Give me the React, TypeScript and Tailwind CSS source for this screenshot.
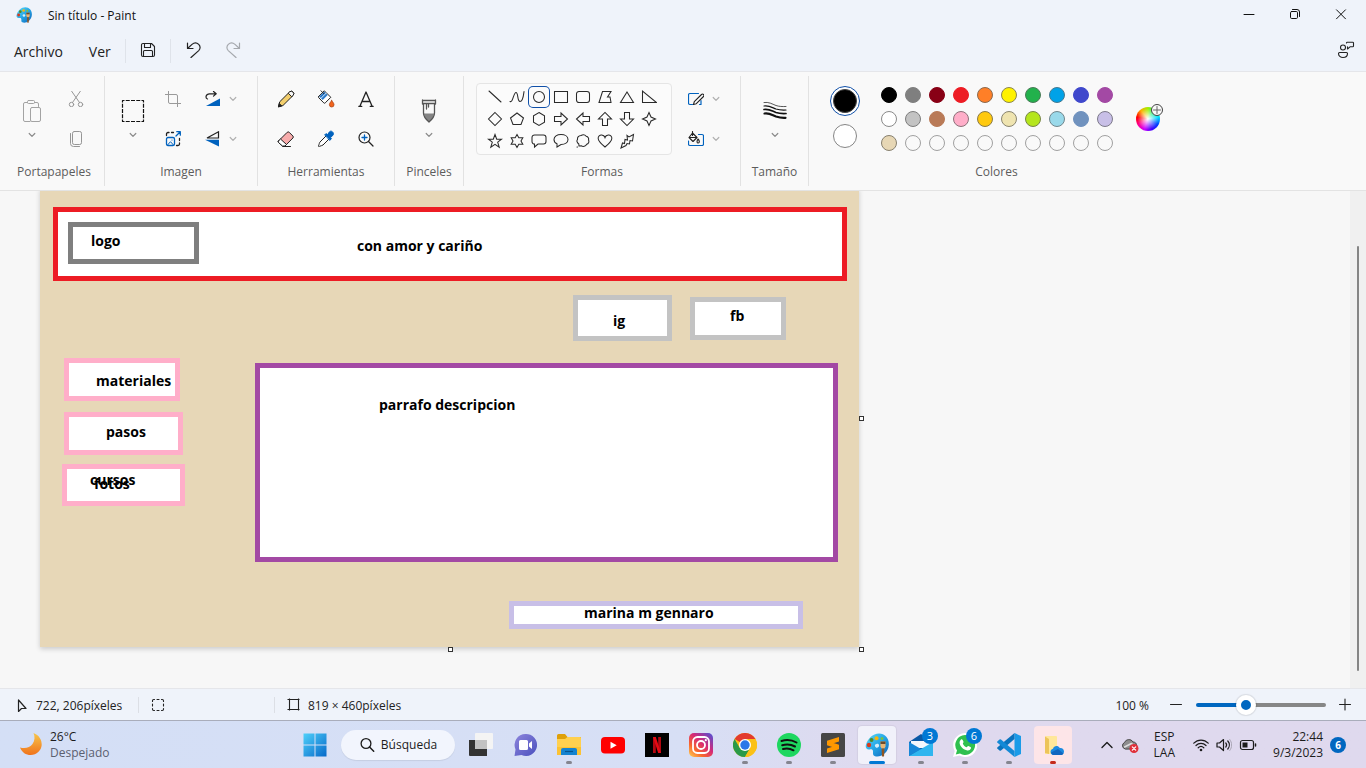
import React from 'react';
import type { ReactNode } from 'react';

type IconProps = { size?: number; box?: number; className?: string; children: ReactNode };

function Icon({ size = 16, box, className = '', children }: IconProps) {
  const b = box ?? size;
  return (
    <svg
      width={size}
      height={size}
      viewBox={`0 0 ${b} ${b}`}
      fill="none"
      stroke="currentColor"
      strokeLinecap="round"
      strokeLinejoin="round"
      className={`shrink-0 ${className}`}
      aria-hidden="true"
    >
      {children}
    </svg>
  );
}

function Chevron({ className = 'text-[#8a8a8a]' }: { className?: string }) {
  return (
    <Icon size={8} className={className}>
      <path d="M1.2 2.5 4 5.3l2.8-2.8" strokeWidth="1.2" />
    </Icon>
  );
}

function PaletteIcon({ size }: { size: number }) {
  return (
    <svg width={size} height={size} viewBox="0 0 24 24" aria-hidden="true">
      <defs>
        <linearGradient id={`pal${size}`} x1="0" y1="0" x2="1" y2="1">
          <stop offset="0" stopColor="#5fdcf8" />
          <stop offset="0.5" stopColor="#25a6e6" />
          <stop offset="1" stopColor="#0f62b8" />
        </linearGradient>
      </defs>
      <path
        d="M14 .5C7.500.5 3 5.500 1 11.500c-1 3 .5 5.500 3.500 5 2-.4 3.400 0 3.500 1.900.1 2-.5 3.600 1.500 4.600 5 2 13.500-2 14.300-11C24.300 5.500 20 .5 14 .5Z"
        fill={`url(#pal${size})`}
      />
      <path d="M11.500 11c2-.8 3.500 1.500 2 3s-3 .5-3.500-.8.300-1.800 1.500-2.200Z" fill="#e8f6fd" opacity="0.9" />
      <circle cx="11.500" cy="5.200" r="2" fill="#f8b50a" />
      <circle cx="6.500" cy="7" r="2" fill="#4e8a2c" />
      <circle cx="4" cy="12" r="2.200" fill="#d83b1e" />
      <circle cx="17" cy="5.500" r="1.500" fill="#7bc142" />
      <path d="M15.500 8.500h5v5l-1 2h-3l-1-2Z" fill="#e9b574" />
      <path d="M15.500 8.500h5v2.500h-5Z" fill="#6d4a2a" />
      <path d="M16.600 15.500h2.800l-.3 7.200c0 1.200-2.200 1.200-2.200 0Z" fill="#8f5522" />
    </svg>
  );
}

/* ---------- Title and menu bars ---------- */

function TitleBar() {
  return (
    <header className="flex h-[30px] items-center bg-[#eff3fa] pr-0.5 pl-4">
      <PaletteIcon size={16} />
      <h1 className="ml-4 flex-1 pt-0.5 text-xs text-[#111]">Sin título - Paint</h1>
      <button type="button" aria-label="Minimizar" className="grid h-[30px] w-[46px] place-items-center text-[#111]">
        <Icon size={12}>
          <path d="M1 5.500h10" />
        </Icon>
      </button>
      <button type="button" aria-label="Restaurar" className="grid h-[30px] w-[46px] place-items-center text-[#111]">
        <Icon size={12}>
          <rect x="1.500" y="2.500" width="7" height="7" rx="1.200" />
          <path d="M3.500.5h4.500a2.500 2.500 0 0 1 2.500 2.500v4.500" />
        </Icon>
      </button>
      <button type="button" aria-label="Cerrar" className="grid h-[30px] w-[46px] place-items-center text-[#111]">
        <Icon size={12}>
          <path d="m1.500.8 9 9m0-9-9 9" />
        </Icon>
      </button>
    </header>
  );
}

function MenuBar() {
  return (
    <nav className="flex h-[42px] items-center border-b border-[#e5e6ea] bg-[#eff3fa] px-3 pr-[11px] text-[#222]">
      <button type="button" className="px-0.5 pt-0.5 text-sm">Archivo</button>
      <button type="button" className="ml-[22px] px-0.5 pt-0.5 text-sm">Ver</button>
      <span className="ml-3 h-6 w-px bg-[#dfe3ea]" />
      <button type="button" aria-label="Guardar" className="ml-[14px] pb-0.5">
        <Icon>
          <path d="M1.500 3a1.500 1.500 0 0 1 1.500-1.500h8.500l3 3V13a1.500 1.500 0 0 1-1.500 1.500H3A1.500 1.500 0 0 1 1.500 13ZM4.500 1.500v4h6v-4M3.500 14.500V9.500a1 1 0 0 1 1-1h7a1 1 0 0 1 1 1v5" strokeWidth="1.100" />
        </Icon>
      </button>
      <span className="ml-[14px] h-6 w-px bg-[#dfe3ea]" />
      <button type="button" aria-label="Deshacer" className="ml-[15px] pb-0.5">
        <Icon>
          <path d="M1.500 1v5.500H7M1.800 6.200 6 2.400c2.200-2 5-1.700 6.700 0s2 4.300 0 6.200L5 15.500" strokeWidth="1.200" />
        </Icon>
      </button>
      <button type="button" aria-label="Rehacer" className="ml-[23px] pb-0.5 text-[#a5a8ad]">
        <Icon>
          <path d="M14.500 1v5.500H9M14.200 6.200 10 2.400C7.800.4 5 .7 3.300 2.400s-2 4.300 0 6.200L11 15.500" strokeWidth="1.200" />
        </Icon>
      </button>
      <button type="button" aria-label="Comentarios" className="ml-auto pb-0.5">
        <Icon size={18}>
          <circle cx="6" cy="6.500" r="2.500" strokeWidth="1.100" />
          <path d="M2.500 11.500h7a1 1 0 0 1 1 1c0 2.500-2 4-4.500 4s-4.500-1.500-4.500-4a1 1 0 0 1 1-1ZM9.500 2a.8.8 0 0 1 .8-.8h5.400a.8.8 0 0 1 .8.8v3a.8.8 0 0 1-.8.8H13L10.500 8V5.800" strokeWidth="1.100" />
        </Icon>
      </button>
    </nav>
  );
}

/* ---------- Ribbon ---------- */

function Group({ label, className = 'px-2', last = false, children }: { label: string; className?: string; last?: boolean; children: ReactNode }) {
  return (
    <section className={`my-1 flex flex-col pt-[3px] ${last ? '' : 'border-r border-[#e2e2e2]'} ${className}`}>
      <div className="flex h-20 items-center">{children}</div>
      <h2 className="mt-[5px] text-center text-xs leading-4 text-[#5c5c5c]">{label}</h2>
    </section>
  );
}

function BigTool({ label, className = 'w-10', children }: { label: string; className?: string; children: ReactNode }) {
  return (
    <button type="button" aria-label={label} className={`flex h-20 flex-col items-center justify-center gap-2 ${className}`}>
      {children}
      <Chevron />
    </button>
  );
}

function Tool({ label, className = 'text-[#222]', children }: { label: string; className?: string; children: ReactNode }) {
  return (
    <button type="button" aria-label={label} className={`grid size-10 place-items-center ${className}`}>
      {children}
    </button>
  );
}

function MenuTool({ label, children }: { label: string; children: ReactNode }) {
  return (
    <button type="button" aria-label={label} className="flex h-10 w-14 items-center justify-center gap-2 text-[#222]">
      {children}
      <Chevron className="text-[#b0b0b0]" />
    </button>
  );
}

const shapes: { name: string; d: string }[] = [
  { name: 'Línea', d: 'M2 2 14 13' },
  { name: 'Curva', d: 'M1 12.500c3 1.500 3.500-9 6-9s1 9 4 9 3.500-6 4-10' },
  { name: 'Óvalo', d: 'M8 2.500a5.500 5.500 0 1 0 0 11 5.500 5.500 0 1 0 0-11Z' },
  { name: 'Rectángulo', d: 'M1.500 2.500h13v11h-13Z' },
  { name: 'Rectángulo redondeado', d: 'M4 2.500h8a2.500 2.500 0 0 1 2.500 2.500v6a2.500 2.500 0 0 1-2.500 2.500H4A2.500 2.500 0 0 1 1.500 11V5A2.500 2.500 0 0 1 4 2.500Z' },
  { name: 'Polígono', d: 'M5.500 2.500h8.500l-3.500 5.500h2.500l1 5.500H2Z' },
  { name: 'Triángulo', d: 'M8 3 14.500 13.500h-13Z' },
  { name: 'Triángulo rectángulo', d: 'M1.500 2v11.500h14Z' },
  { name: 'Rombo', d: 'M8 1.500 14.500 8 8 14.500 1.500 8Z' },
  { name: 'Pentágono', d: 'M8 2 14.500 7l-2.500 6.500H4L1.500 7Z' },
  { name: 'Hexágono', d: 'M8 1.500 13.500 4.700v6.600L8 14.500l-5.500-3.200V4.700Z' },
  { name: 'Flecha derecha', d: 'M1.500 5.500H8v-3.500L14.500 8 8 14v-3.500H1.500Z' },
  { name: 'Flecha izquierda', d: 'M14.500 5.500H8v-3.500L1.500 8 8 14v-3.500h6.500Z' },
  { name: 'Flecha arriba', d: 'M5.500 14.500V8H1.500L8 1.500 14.500 8h-4v6.500Z' },
  { name: 'Flecha abajo', d: 'M5.500 1.500V8H1.500L8 14.500 14.500 8h-4V1.500Z' },
  { name: 'Estrella de cuatro puntas', d: 'm8 1.500 2 4.500 4.500 2-4.500 2-2 4.500L6 10 1.500 8 6 6Z' },
  { name: 'Estrella de cinco puntas', d: 'm8 1.500 1.700 4.700h4.800l-3.800 3 1.500 5L8 11.300l-4.200 2.900 1.500-5-3.800-3h4.800Z' },
  { name: 'Estrella de seis puntas', d: 'm8 1.500 1.800 3.300h4L12 8l1.800 3.200h-4L8 14.500l-1.800-3.300h-4L4 8 2.200 4.800h4Z' },
  { name: 'Llamada rectangular', d: 'M3.500 2h9A2.500 2.500 0 0 1 15 4.500v4a2.500 2.500 0 0 1-2.500 2.500H7l-3.500 3V11A2.500 2.500 0 0 1 1 8.500v-4A2.500 2.500 0 0 1 3.500 2Z' },
  { name: 'Llamada ovalada', d: 'M8 1.500c4 0 7 2 7 5s-3 5-7 5L4 14v-3.200C2 10 1 8.400 1 6.500c0-3 3-5 7-5Z' },
  { name: 'Llamada de nube', d: 'M6 2.500c2-1.200 4-.8 5.200.8 2 .4 2.800 2 2.300 3.700 1 2-.2 3.800-1.800 4.200-1.200 2.300-3.700 2.800-5.500 1.600L4 13l-.2-2C1.800 9.500 1.500 7.700 2.500 6.500 2.300 4.300 4 2.700 6 2.500ZM2 14h.5' },
  { name: 'Corazón', d: 'M8 14C5.500 12 1.500 8.500 1.200 5.800.8 3.200 3 1.800 4.700 2 6.500 2.200 7.500 3 8 4.500c.5-1.500 1.500-2.300 3.300-2.500 1.700-.2 3.900 1.200 3.500 3.800C14.500 8.500 10.500 12 8 14Z' },
  { name: 'Relámpago', d: 'm8 2.500 2 1.500L14.500 1.500 13.500 8l-2.500-.5-.5 3.500-2.500-.5-1 2L2 15l1.500-5 2 .5L6 6.500l2.500.5Z' },
];

function ShapeGallery() {
  return (
    <div className="ml-1 grid h-[72px] w-[196px] grid-cols-[repeat(8,22px)] grid-rows-[repeat(3,22px)] rounded border border-[#e5e5e5] bg-[#fbfbfb] px-[7px] py-0.5">
      {shapes.map((s) => (
        <button
          key={s.name}
          type="button"
          aria-label={s.name}
          className={`grid place-items-center text-[#2a2a2a] ${s.name === 'Óvalo' ? 'm-px rounded ring-1 ring-[#0f4fa8]' : ''}`}
        >
          <Icon>
            <path d={s.d} strokeWidth="1.050" strokeLinejoin="miter" />
          </Icon>
        </button>
      ))}
    </div>
  );
}

const swatches: { name: string; className: string }[] = [
  { name: 'Negro', className: 'bg-black border-black' },
  { name: 'Gris 50 %', className: 'bg-[#7f7f7f] border-[#7f7f7f]' },
  { name: 'Rojo oscuro', className: 'bg-[#880015] border-[#880015]' },
  { name: 'Rojo', className: 'bg-[#ed1c24] border-[#ed1c24]' },
  { name: 'Naranja', className: 'bg-[#ff7f27] border-[#8a6a50]' },
  { name: 'Amarillo', className: 'bg-[#fff200] border-[#8a8550]' },
  { name: 'Verde', className: 'bg-[#22b14c] border-[#4b7a58]' },
  { name: 'Turquesa', className: 'bg-[#00a2e8] border-[#467a90]' },
  { name: 'Índigo', className: 'bg-[#3f48cc] border-[#3f48cc]' },
  { name: 'Púrpura', className: 'bg-[#a349a4] border-[#a349a4]' },
  { name: 'Blanco', className: 'bg-white border-[#8a8a8a]' },
  { name: 'Gris 25 %', className: 'bg-[#c3c3c3] border-[#7d7d7d]' },
  { name: 'Marrón', className: 'bg-[#b97a57] border-[#b97a57]' },
  { name: 'Rosa', className: 'bg-[#ffaec9] border-[#8c7179]' },
  { name: 'Oro', className: 'bg-[#ffc90e] border-[#8a7a48]' },
  { name: 'Amarillo claro', className: 'bg-[#efe4b0] border-[#8a8570]' },
  { name: 'Lima', className: 'bg-[#b5e61d] border-[#788548]' },
  { name: 'Turquesa claro', className: 'bg-[#99d9ea] border-[#71868c]' },
  { name: 'Gris azulado', className: 'bg-[#7092be] border-[#7092be]' },
  { name: 'Lavanda', className: 'bg-[#c8bfe7] border-[#7d7a8a]' },
  { name: 'Arena', className: 'bg-[#e7d7b5] border-[#87806f]' },
];

const emptySlots = [1, 2, 3, 4, 5, 6, 7, 8, 9];

function Ribbon() {
  return (
    <div className="flex h-[119px] border-b border-[#e3e3e3] bg-[#f9f9f9]">
      <Group label="Portapapeles" className="pr-2 pl-3">
        <BigTool label="Pegar">
          <Icon size={24} className="text-[#a3a3a3]">
            <path d="M7.500 3.500H5A1.500 1.500 0 0 0 3.500 5v16A1.500 1.500 0 0 0 5 22.500h5M14.500 3.500H17A1.500 1.500 0 0 1 18.500 5v2.500M8.500 1.500h5a1 1 0 0 1 1 1v1a1 1 0 0 1-1 1h-5a1 1 0 0 1-1-1v-1a1 1 0 0 1 1-1Z" />
            <rect x="10.500" y="8.500" width="10" height="14" rx="1.500" />
          </Icon>
        </BigTool>
        <div className="ml-1">
          <Tool label="Cortar" className="text-[#969696]">
            <Icon>
              <circle cx="3.500" cy="13.500" r="2.200" />
              <circle cx="12.500" cy="13.500" r="2.200" />
              <path d="M3.500 0 11.500 11.500M12.500 0 4.500 11.500" />
            </Icon>
          </Tool>
          <Tool label="Copiar" className="text-[#969696]">
            <Icon>
              <rect x="4.500" y=".5" width="9" height="13" rx="1.800" />
              <path d="M2.500 2.500v10a3 3 0 0 0 3 3h6" />
            </Icon>
          </Tool>
        </div>
      </Group>

      <Group label="Imagen">
        <BigTool label="Seleccionar">
          <Icon size={24} className="text-[#111]">
            <rect x="1.500" y="1.500" width="21" height="21" strokeDasharray="4 1.250" strokeDashoffset="2" strokeLinecap="butt" strokeWidth="1.200" />
          </Icon>
        </BigTool>
        <div>
          <Tool label="Recortar" className="text-[#9a9a9a]">
            <Icon>
              <path d="M3.500 0v11a1.500 1.500 0 0 0 1.500 1.500h11M0 3.500h11A1.500 1.500 0 0 1 12.500 5v11" />
            </Icon>
          </Tool>
          <Tool label="Cambiar tamaño">
            <Icon>
              <path d="M1.500 4.500V3A1.500 1.500 0 0 1 3 1.500h1M6.500 1.500h2M14.500 7.500v2M14.500 12v1a1.500 1.500 0 0 1-1.500 1.500h-1.500" strokeWidth="1.300" />
              <path d="M11 5 15 1M11.800.7h3.500v3.500" stroke="#0062be" strokeWidth="1.300" />
              <rect x="1.500" y="6.500" width="8" height="8" rx="1.500" stroke="#0062be" strokeWidth="1.300" />
              <path d="m2.500 14 3-3.300 3 3.300" stroke="#0062be" />
              <circle cx="7" cy="9" r=".6" fill="#0062be" stroke="none" />
            </Icon>
          </Tool>
        </div>
        <div>
          <MenuTool label="Girar">
            <Icon>
              <path d="M15 7.500V15H1Z" fill="#0062be" stroke="none" />
              <path d="M2.500 8C0 7 .8 2.800 4.500 2.800H11M8.500.5l2.700 2.300-2.700 2.300" strokeWidth="1.200" />
            </Icon>
          </MenuTool>
          <MenuTool label="Voltear">
            <Icon>
              <path d="M13.500.8v6.200H2Z" strokeWidth="1.200" strokeLinejoin="miter" />
              <path d="M14 8.800V15.500L0 8.800Z" fill="#0062be" stroke="none" />
            </Icon>
          </MenuTool>
        </div>
      </Group>

      <Group label="Herramientas">
        <div className="grid grid-cols-[40px_40px_40px]">
          <Tool label="Lápiz">
            <Icon size={18}>
              <path d="m1.500 16.500 1.200-4.700L12.500 2a2.400 2.400 0 0 1 3.500 3.500L6.200 15.300Z" fill="#f3cf6d" />
              <path d="m11.500 3 1-1A2.400 2.400 0 0 1 16 5.500l-1 1Z" fill="#f8f8f8" />
              <path d="m1.500 16.500.8-3 2.200 2.200Z" fill="#222" />
            </Icon>
          </Tool>
          <Tool label="Relleno">
            <Icon size={18}>
              <path d="M1.800 6.300 7.300.8l6.500 6.500-5.600 5.600a1 1 0 0 1-1.400 0L1.800 7.800a1 1 0 0 1 0-1.500Z" fill="#fff" />
              <path d="M2.300 6.500 7.300 1.500l3.400 3.400-5 5Z" fill="#2b79c8" stroke="none" />
              <path d="m4.300 8 5-5" stroke="#d7ebff" />
              <path d="M4 .8 7 3.800" />
              <path d="M14.700 10.500c1.300 1.800 2.300 3 2.300 4.200a2.300 2.300 0 0 1-4.600 0c0-1.200 1-2.400 2.300-4.200Z" fill="#f2641d" stroke="#a23a0a" strokeWidth=".7" />
            </Icon>
          </Tool>
          <Tool label="Texto">
            <Icon>
              <path d="m2 15 6-14 6 14M4 10.500h8M.8 15.300h3M12.200 15.300h3" strokeWidth="1.300" />
            </Icon>
          </Tool>
          <Tool label="Borrador">
            <Icon size={18}>
              <path d="m1.500 11 8.700-8.700a1.500 1.500 0 0 1 2 0l3.700 3.700a1.500 1.500 0 0 1 0 2L8 16H5.500l-4-3.500a1 1 0 0 1 0-1.500Z" fill="#f8acac" />
              <path d="m1.500 11 2-2 6 5.500L8 16H5.500l-4-3.500a1 1 0 0 1 0-1.500Z" fill="#fff" />
              <path d="M6 16.500h7.500" />
            </Icon>
          </Tool>
          <Tool label="Selector de color">
            <Icon size={18}>
              <path d="m9 6-6 6c-.8.800-.5 2-1.500 3.500-.5.800.200 1.300 1 .8 1.500-.8 2.700-.5 3.500-1.300l6-6" fill="#fff" />
              <path d="m8 4.500 1.500-.8 1.300.9 1.500-2.600c1.600-2.300 5.400.5 3.700 3.300L13.500 7.200l.9 1.500-1.400 1.500Z" fill="#0062be" stroke="#0062be" />
            </Icon>
          </Tool>
          <Tool label="Lupa">
            <Icon>
              <circle cx="6.500" cy="6.500" r="5.500" strokeWidth="1.200" />
              <path d="m10.500 10.500 4.500 4.500" strokeWidth="1.200" />
              <path d="M4 6.500h5M6.500 4v5" stroke="#0062be" strokeWidth="1.300" />
            </Icon>
          </Tool>
        </div>
      </Group>

      <Group label="Pinceles">
        <BigTool label="Pinceles" className="w-[52px]">
          <Icon size={24} className="text-[#555]">
            <path d="M7 14.500h10c0 2.700-1.800 5.500-5 8.500-3.200-3-5-5.800-5-8.500Z" fill="#858585" stroke="none" />
            <path d="M5.500 1v4M18.500 1v4M5.500 1.500h13M5.500 4.500h13M6.500 5v9c0 3.500 2.500 6.500 5.500 9 3-2.500 5.500-5.500 5.500-9V5M9.500 5v5M11.500 5v3" strokeWidth="1.300" />
          </Icon>
        </BigTool>
      </Group>

      <Group label="Formas">
        <ShapeGallery />
        <div className="ml-1">
          <MenuTool label="Contorno de forma">
            <Icon>
              <path d="M10.500 2.500H2A1.500 1.500 0 0 0 .5 4v8A1.500 1.500 0 0 0 2 13.500h2.500M11.500 13.500H13V9.500" stroke="#0062be" strokeWidth="1.200" />
              <path d="m5.500 13.500.8-2.800 7.200-7.200a1.400 1.400 0 0 1 2 2l-7.200 7.200Z" fill="#fff" strokeWidth="1.100" />
            </Icon>
          </MenuTool>
          <MenuTool label="Relleno de forma">
            <Icon>
              <path d="M.5 10v3A1.500 1.500 0 0 0 2 14.500h12a1.500 1.500 0 0 0 1.500-1.500V5A1.500 1.500 0 0 0 14 3.500h-3.500" stroke="#0062be" strokeWidth="1.200" />
              <path d="m4.500 2 4.500 4.500-4 4-4-4Zm0-1.500v4M1 6.500h8M10 8c2 2 1.500 4 .2 4S8.500 10.500 10 8Z" strokeWidth="1.100" />
            </Icon>
          </MenuTool>
        </div>
      </Group>

      <Group label="Tamaño">
        <BigTool label="Tamaño" className="w-[51px]">
          <Icon size={24} className="text-[#111]">
            <path d="M1 3.500c5-.8 8 1.500 12 3 3 1 6 1.200 10 1" strokeWidth=".7" />
            <path d="M1 7c5-.8 8 1.500 12 3 3 1 6 1.200 10 1" strokeWidth="1.200" />
            <path d="M1 10.500c5-.8 8 1.500 12 3 3 1 6 1.200 10 1" strokeWidth="1.700" />
            <path d="M1.500 14.500c5-.8 7.500 1.500 11.500 3 3 1 6 1.500 9.500 1.300" strokeWidth="2.200" />
          </Icon>
        </BigTool>
      </Group>

      <Group label="Colores" className="pr-2 pl-4" last>
        <div className="flex h-[72px] w-10 flex-col items-center justify-center gap-2 pb-[5px]">
          <button type="button" aria-label="Color 1" className="grid size-[30px] place-items-center rounded-full border border-[#0f4fa8] bg-white">
            <span className="size-6 rounded-full border border-[#444] bg-black" />
          </button>
          <button type="button" aria-label="Color 2" className="size-6 rounded-full border border-[#858585] bg-white" />
        </div>
        <div className="ml-3 grid grid-cols-[repeat(10,24px)] grid-rows-[repeat(3,24px)] place-items-center">
          {swatches.map((s) => (
            <button key={s.name} type="button" aria-label={s.name} className={`size-4 rounded-full border ${s.className}`} />
          ))}
          {emptySlots.map((n) => (
            <button key={n} type="button" aria-label={`Color personalizado ${n}`} className="size-4 rounded-full border border-[#a0a0a0]" />
          ))}
        </div>
        <button type="button" aria-label="Editar colores" className="relative ml-[11px] grid size-10 place-items-center">
          <span className="size-6 rounded-full bg-[radial-gradient(circle,#ffffff_0%,#ffffff00_62%),conic-gradient(from_0deg,#a0f000,#00f080,#00e0ff,#0040ff,#4000ff,#d000ff,#ff0090,#ff0000,#ffb000,#a0f000)]" />
          <span className="absolute top-[5px] right-[5px] grid size-3 place-items-center rounded-full border border-[#444] bg-[#f9f9f9] text-[#666]">
            <Icon size={8}>
              <path d="M4 .5v7M.5 4h7" />
            </Icon>
          </span>
        </button>
      </Group>
    </div>
  );
}

/* ---------- Drawing ---------- */

const labelText = "absolute font-['Open_Sans','Noto_Sans',sans-serif] text-sm leading-5 font-bold whitespace-nowrap text-black";

function Drawing() {
  return (
    <div className="absolute -top-[3px] left-10 h-[459px] w-[819px] bg-[#e7d7b7] shadow-[0_2px_5px_#0000002e]">
      <div className="absolute top-[19px] left-[13px] h-[74px] w-[794px] border-5 border-[#ed1c24] bg-white" />
      <div className="absolute top-[34px] left-7 h-[42px] w-[131px] border-5 border-[#7f7f7f] bg-white" />
      <p className={`${labelText} top-[43px] left-[51px]`}>logo</p>
      <p className={`${labelText} top-[48px] left-[317px]`}>con amor y cariño</p>

      <div className="absolute top-[107px] left-[533px] h-[46px] w-[99px] border-5 border-[#c3c3c3] bg-white" />
      <p className={`${labelText} top-[123px] left-[573px]`}>ig</p>
      <div className="absolute top-[109px] left-[650px] h-[43px] w-24 border-5 border-[#c3c3c3] bg-white" />
      <p className={`${labelText} top-[118px] left-[690px]`}>fb</p>

      <div className="absolute top-[170px] left-6 h-[43px] w-[116px] border-5 border-[#ffaec9] bg-white" />
      <p className={`${labelText} top-[183px] left-[56px]`}>materiales</p>
      <div className="absolute top-[224px] left-6 h-[43px] w-[119px] border-5 border-[#ffaec9] bg-white" />
      <p className={`${labelText} top-[234px] left-[66px]`}>pasos</p>
      <div className="absolute top-[276px] left-[22px] h-[42px] w-[123px] border-5 border-[#ffaec9] bg-white" />
      <p className={`${labelText} top-[282px] left-[50px]`}>cursos</p>
      <p className={`${labelText} top-[286px] left-[54px]`}>fotos</p>

      <div className="absolute top-[175px] left-[215px] h-[199px] w-[583px] border-5 border-[#a349a4] bg-white" />
      <p className={`${labelText} top-[207px] left-[339px]`}>parrafo descripcion</p>

      <div className="absolute top-[413px] left-[469px] h-7 w-[294px] border-5 border-[#c8bfe7] bg-white" />
      <p className={`${labelText} top-[415px] left-[544px]`}>marina m gennaro</p>

      <span className="absolute top-full left-1/2 -ml-0.5 size-[5px] border border-[#333] bg-white" />
      <span className="absolute top-1/2 left-full -mt-0.5 size-[5px] border border-[#333] bg-white" />
      <span className="absolute top-full left-full size-[5px] border border-[#333] bg-white" />
    </div>
  );
}

function Workspace() {
  return (
    <main className="flex min-h-[497px] flex-1 bg-[#f7f7f7]">
      <div className="relative flex-1 overflow-hidden">
        <Drawing />
      </div>
      <div className="flex w-4 justify-center bg-[#f0f0f0] pt-[55px] pb-[17px]">
        <div className="w-0.5 rounded-full bg-[#858585]" />
      </div>
    </main>
  );
}

/* ---------- Status bar ---------- */

function StatusBar() {
  return (
    <footer className="flex h-8 items-center border-t border-[#e5e6ea] bg-[#eff3fa] pr-[14px] pl-[13px] text-xs text-[#222]">
      <div className="flex h-full w-[125px] items-center gap-[7px] pt-0.5">
        <Icon>
          <path d="M5.500 2v11.500l3-3h4.500Z" strokeWidth="1.200" />
        </Icon>
        <span>722, 206píxeles</span>
      </div>
      <span className="h-4 w-px bg-[#dcdfe5]" />
      <div className="flex w-[135px] items-center pl-3">
        <Icon size={14}>
          <path d="M1.500 3.500v-.8A1.200 1.200 0 0 1 2.700 1.500h.8M10.500 1.500h.8a1.200 1.200 0 0 1 1.200 1.200v.8M12.500 10.500v.8a1.200 1.200 0 0 1-1.200 1.200h-.8M3.500 12.500h-.8a1.200 1.200 0 0 1-1.200-1.200v-.8M6 1.500h2M6 12.500h2M1.500 6v2M12.500 6v2" strokeWidth="1.100" />
        </Icon>
      </div>
      <span className="h-4 w-px bg-[#dcdfe5]" />
      <div className="flex items-center gap-2 pt-0.5 pl-3">
        <Icon size={13} className="-mt-0.5">
          <path d="M2.500.5v12M11.500.5v12M.5 1.500h12M.5 11.500h12" strokeWidth="1.100" strokeLinecap="butt" />
        </Icon>
        <span>819 × 460píxeles</span>
      </div>
      <span className="mr-5 ml-auto pt-0.5">100 %</span>
      <button type="button" aria-label="Alejar" className="mr-[13px]">
        <Icon size={14}>
          <path d="M1.500 6.500h11" />
        </Icon>
      </button>
      <input
        type="range"
        aria-label="Zoom"
        min={0}
        max={100}
        defaultValue={36}
        className="h-5 w-[130px] appearance-none bg-transparent [&::-webkit-slider-runnable-track]:h-1 [&::-webkit-slider-runnable-track]:rounded-full [&::-webkit-slider-runnable-track]:bg-[linear-gradient(to_right,#0067c0_38%,#868686_38%)] [&::-webkit-slider-thumb]:-mt-2 [&::-webkit-slider-thumb]:size-5 [&::-webkit-slider-thumb]:appearance-none [&::-webkit-slider-thumb]:rounded-full [&::-webkit-slider-thumb]:border-5 [&::-webkit-slider-thumb]:border-white [&::-webkit-slider-thumb]:bg-[#0067c0] [&::-webkit-slider-thumb]:shadow-[0_0_1px_1px_#00000018]"
      />
      <button type="button" aria-label="Acercar" className="ml-3">
        <Icon size={14}>
          <path d="M1.500 6.500h11M7 1v11" strokeWidth="1.100" />
        </Icon>
      </button>
    </footer>
  );
}

/* ---------- Taskbar ---------- */

type AppProps = { label: string; state?: 'none' | 'open' | 'active' | 'alert'; badge?: string; children: ReactNode };

const appBackground = {
  none: '',
  open: '',
  active: 'bg-[#f1f1fa] shadow-[0_0_1px_1px_#0000000d]',
  alert: 'bg-[#fde5e8]',
};

const appMark = {
  none: 'hidden',
  open: 'w-1.5 bg-[#85858f]',
  active: 'w-4 bg-[#0078d4]',
  alert: 'w-1.5 bg-[#c42b1c]',
};

function AppButton({ label, state = 'none', badge, children }: AppProps) {
  return (
    <div className="w-11 px-[3px]">
      <button type="button" aria-label={label} className={`relative grid h-[38px] w-full place-items-center rounded ${appBackground[state]}`}>
        <svg width="24" height="24" viewBox="0 0 24 24" aria-hidden="true">
          {children}
        </svg>
        <span className={`absolute bottom-0 left-1/2 h-[3px] -translate-x-1/2 rounded-full ${appMark[state]}`} />
        {badge && (
          <span className="absolute top-0.5 right-0.5 grid size-4 place-items-center rounded-full bg-[#0078d4] text-[11px] leading-4 text-white">
            {badge}
          </span>
        )}
      </button>
    </div>
  );
}

function Taskbar() {
  return (
    <div className="grid h-12 grid-cols-[1fr_auto_1fr] items-center border-t border-[#a9adbb] bg-linear-to-r from-[#d4dff6] from-0% via-[#d7dff5] via-50% to-[#dfd9ee] to-65% text-xs text-[#1c1c1c]">
      <button type="button" className="ml-[18px] flex items-center gap-2 justify-self-start text-left leading-4">
        <svg width="24" height="24" viewBox="0 0 24 24" aria-hidden="true">
          <defs>
            <linearGradient id="moon" x1="0" y1="0" x2="0" y2="1">
              <stop offset="0" stopColor="#f7c64a" />
              <stop offset="1" stopColor="#f0731c" />
            </linearGradient>
          </defs>
          <path d="M15.500 0C21 2 24 7 23.700 12c-.5 5.500-5 10-11 10C8 22 4 19.500 2 14.500c5 1.500 10 .2 12.500-3.500 2.500-3.500 2.500-7.500 1-11Z" fill="url(#moon)" />
        </svg>
        <span>
          <span className="block">26°C</span>
          <span className="block text-[#5b6070]">Despejado</span>
        </span>
      </button>

      <div className="flex items-center pl-0.5">
        <AppButton label="Inicio">
          <defs>
            <linearGradient id="win" x1="0" y1="0" x2="1" y2="1">
              <stop offset="0" stopColor="#4fd0fa" />
              <stop offset="1" stopColor="#0669c9" />
            </linearGradient>
          </defs>
          <path d="M.5.500h11v11H.5ZM12.500.500h11v11h-11ZM.5 12.500h11v11H.5ZM12.500 12.500h11v11h-11Z" fill="url(#win)" />
        </AppButton>
        <button type="button" className="mx-1 flex h-[30px] w-[114px] items-center justify-center gap-1.5 rounded-full bg-[#f2f5fd] shadow-[0_1px_1px_#00000014]">
          <Icon>
            <circle cx="7" cy="6.500" r="4.900" strokeWidth="1.300" />
            <path d="m10.500 10 4.200 4.200" strokeWidth="1.500" />
          </Icon>
          Búsqueda
        </button>
        <AppButton label="Vista de tareas">
          <rect x="6" y="0" width="18" height="16" rx="1" fill="#f4f4f4" />
          <path d="M0 7h6v9h12v7H1a1 1 0 0 1-1-1Z" fill="#333" />
          <path d="M6 7h12v9H6Z" fill="#c2c2c2" />
        </AppButton>
        <AppButton label="Chat">
          <defs>
            <linearGradient id="chat" x1="0" y1="0" x2="1" y2="1">
              <stop offset="0" stopColor="#8d85dc" />
              <stop offset="1" stopColor="#4a50bd" />
            </linearGradient>
          </defs>
          <path d="M12.500 1a11 11 0 1 1-4 21L1.500 23l1-6.500A11 11 0 0 1 12.500 1Z" fill="url(#chat)" />
          <path d="M6 8.500A1.500 1.500 0 0 1 7.500 7h6A1.500 1.500 0 0 1 15 8.500v7a1.500 1.500 0 0 1-1.500 1.500h-6A1.500 1.500 0 0 1 6 15.500Zm10 2L19 8v8l-3-2.500Z" fill="#fff" />
        </AppButton>
        <AppButton label="Explorador de archivos" state="open">
          <path d="M0 2.500A1.500 1.500 0 0 1 1.500 1H8l2.500 3H24v4H0Z" fill="#dfa00a" />
          <path d="M0 6h8l2.500-2H23a1 1 0 0 1 1 1v17H0Z" fill="#ffd04f" />
          <path d="M0 14h24v8H0Z" fill="#fcc233" />
          <path d="M4 22v-5a2 2 0 0 1 2-2h12a2 2 0 0 1 2 2v5Z" fill="#1583d0" />
          <path d="M8 18.500h8" stroke="#07548f" strokeWidth="1.200" />
        </AppButton>
        <AppButton label="YouTube">
          <rect x="0" y="4" width="24" height="16.500" rx="4" fill="#f00" />
          <path d="m9.500 8.800 6.200 3.500-6.200 3.500Z" fill="#fff" />
        </AppButton>
        <AppButton label="Netflix">
          <path d="M0 0h24v24H0Z" fill="#000" />
          <path d="M8 4h2.800v16H8ZM13.200 4H16v16h-2.800Z" fill="#b20710" />
          <path d="M8 4h2.800L16 20h-2.800Z" fill="#e50914" />
        </AppButton>
        <AppButton label="Instagram">
          <defs>
            <linearGradient id="insta" x1="0" y1="1" x2="0.9" y2="0">
              <stop offset="0" stopColor="#ffd254" />
              <stop offset="0.3" stopColor="#f9682d" />
              <stop offset="0.6" stopColor="#d62976" />
              <stop offset="1" stopColor="#5a4fd0" />
            </linearGradient>
          </defs>
          <rect width="24" height="24" rx="5" fill="url(#insta)" />
          <rect x="4" y="4" width="16" height="16" rx="4.500" fill="none" stroke="#fff" strokeWidth="1.800" />
          <circle cx="12" cy="12" r="4" fill="none" stroke="#fff" strokeWidth="1.800" />
          <circle cx="16.800" cy="7.200" r="1.100" fill="#fff" />
        </AppButton>
        <AppButton label="Google Chrome" state="open">
          <circle cx="12" cy="12" r="12" fill="#fbc116" />
          <path d="M12 12 1.600 6A12 12 0 0 1 22.400 6H12Z" fill="#e33b2e" />
          <path d="M1.600 6A12 12 0 0 0 12 24l5.200-9L12 12 6.800 15Z" fill="#2a9a48" />
          <path d="M12 6h10.400A12 12 0 0 1 12 24l5.200-9Z" fill="#fbc116" />
          <circle cx="12" cy="12" r="6" fill="#fff" />
          <circle cx="12" cy="12" r="4.700" fill="#2a78e8" />
        </AppButton>
        <AppButton label="Spotify" state="open">
          <circle cx="12" cy="12" r="12" fill="#1ed760" />
          <path d="M4.500 8c5-1.500 10.500-1 15 1.500M5.200 12.200c4.500-1.200 9-.8 12.800 1.300M6 16c3.700-.9 7.200-.5 10.500 1.300" fill="none" stroke="#111" strokeWidth="2" strokeLinecap="round" />
        </AppButton>
        <AppButton label="Sublime Text" state="open">
          <rect width="24" height="24" rx="1.500" fill="#464646" />
          <path d="M18 4v4.500l-12 3.700V7.800ZM6 7.800l12 4v4.500L6 12.300ZM18 11.800v4.500L6 20v-4.500Z" fill="#ff9800" />
        </AppButton>
        <AppButton label="Paint" state="active">
          <PaletteIcon size={24} />
        </AppButton>
        <AppButton label="Correo" state="open" badge="3">
          <path d="M0 9 12 1l12 8v14H0Z" fill="#0b59a5" />
          <path d="M2 8h20v7H2Z" fill="#f3f7fc" />
          <path d="m0 9 12 7L0 23Z" fill="#1687d8" />
          <path d="M24 9v14H0Z" fill="#2fb5ef" />
        </AppButton>
        <AppButton label="WhatsApp" state="open" badge="6">
          <path d="M12 0a12 12 0 1 1-5.500 22.500L0 24l1.700-6A12 12 0 0 1 12 0Z" fill="#fff" />
          <path d="M12 2a10 10 0 1 1-5 18.600L2.800 21.500 4 17.500A10 10 0 0 1 12 2Z" fill="#2fc04f" />
          <path d="M8 6.500c1-.8 1.700 0 2.500 2.200.3.800-.8 1.500-.6 2 .8 1.700 2 2.800 3.600 3.500.6.200 1.200-1.400 1.900-1.100 2.600 1 2.900 1.300 2.500 2.400-.7 1.800-2.500 2.200-4.300 1.700-3.700-1-6.500-4-7-7-.2-1.600.6-3 1.400-3.700Z" fill="#fff" />
        </AppButton>
        <AppButton label="Visual Studio Code" state="open">
          <path d="m17.500 0 6.500 3v18l-6.500 3Z" fill="#1a9be8" />
          <path d="M17.500 0v6L4 17.500a1.200 1.200 0 0 1-1.500 0L.5 15.800a1 1 0 0 1 0-1.500Z" fill="#0a73bd" />
          <path d="M17.500 24v-6L4 6.500a1.200 1.200 0 0 0-1.500 0L.5 8.200a1 1 0 0 0 0 1.500Z" fill="#1389d6" />
        </AppButton>
        <AppButton label="OneDrive" state="alert">
          <path d="M4 4a1 1 0 0 1 1-1h10a1 1 0 0 1 1 1v17H4Z" fill="#ffe79a" />
          <path d="M4 3.500 8 6v15l-4-1Z" fill="#edc45a" />
          <path d="M12.500 22a3.200 3.200 0 0 1-.5-6.300c.8-3 5-3.600 6.700-.7 2.800-.3 4.300 1.300 4.300 3.500 0 2-1.500 3.500-3.500 3.500Z" fill="#1b8ae0" />
          <path d="m10 19.500 7-3.500 5.500 4.500c-.6 1-1.700 1.500-3 1.500h-7c-1.200 0-2.200-1-2.500-2.500Z" fill="#1267bf" />
        </AppButton>
      </div>

      <div className="flex items-center justify-self-end pr-5">
        <button type="button" aria-label="Mostrar iconos ocultos" className="mr-1.5">
          <Icon>
            <path d="m3 10.500 5-5 5 5" strokeWidth="1.400" />
          </Icon>
        </button>
        <button type="button" aria-label="Error de OneDrive" className="mr-[15px]">
          <Icon size={18}>
            <path d="M4 13a3.500 3.500 0 0 1-.5-6.500C5 3 10 2.500 12 6c2.500 0 3.500 1.500 3.500 3.500S14 13 12 13Z" fill="#8e8e8e" stroke="#444" />
            <path d="m3.500 11 7-3.500 4 3" stroke="#ddd" strokeWidth="1.500" />
            <circle cx="13" cy="12.500" r="4.500" fill="#e0303a" stroke="none" />
            <path d="m11.300 10.800 3.400 3.400m0-3.400-3.400 3.400" stroke="#fff" strokeWidth="1.200" />
          </Icon>
        </button>
        <button type="button" className="mr-[18px] text-center leading-4">
          <span className="block">ESP</span>
          <span className="block">LAA</span>
        </button>
        <button type="button" aria-label="Red, volumen y batería" className="mr-4 flex items-center gap-[7px]">
          <Icon>
            <path d="M.8 6.200c4-4.200 10.400-4.200 14.400 0M3 8.500c2.800-2.800 7.200-2.800 10 0M5.200 10.800c1.600-1.500 4-1.500 5.600 0" strokeWidth="1.200" />
            <circle cx="8" cy="13" r="1.300" fill="currentColor" stroke="none" />
          </Icon>
          <Icon>
            <path d="M1 6v4h2.500l4 3.500v-11L3.500 6ZM9.800 6c1 1.200 1 2.800 0 4M11.800 4c2 2.300 2 5.700 0 8" strokeWidth="1.200" />
            <path d="M13.800 2.500c2.500 3.200 2.500 7.800 0 11" stroke="#aaa6b5" />
          </Icon>
          <Icon size={18}>
            <rect x="1.500" y="4.500" width="13" height="9" rx="2" strokeWidth="1.200" />
            <path d="M16.500 8v2" strokeWidth="1.500" />
            <rect x="3.500" y="6.500" width="5" height="5" fill="currentColor" stroke="none" />
          </Icon>
        </button>
        <button type="button" className="flex items-center gap-[7px] text-right leading-4">
          <span>
            <span className="block">22:44</span>
            <span className="block">9/3/2023</span>
          </span>
          <span className="grid size-4 place-items-center rounded-full bg-[#0067c0] text-[10px] font-bold text-white">6</span>
        </button>
      </div>
    </div>
  );
}

export default function App() {
  return (
    <div className="flex min-h-screen flex-col font-['Open_Sans','Noto_Sans',sans-serif]">
      <TitleBar />
      <MenuBar />
      <Ribbon />
      <Workspace />
      <StatusBar />
      <Taskbar />
    </div>
  );
}
